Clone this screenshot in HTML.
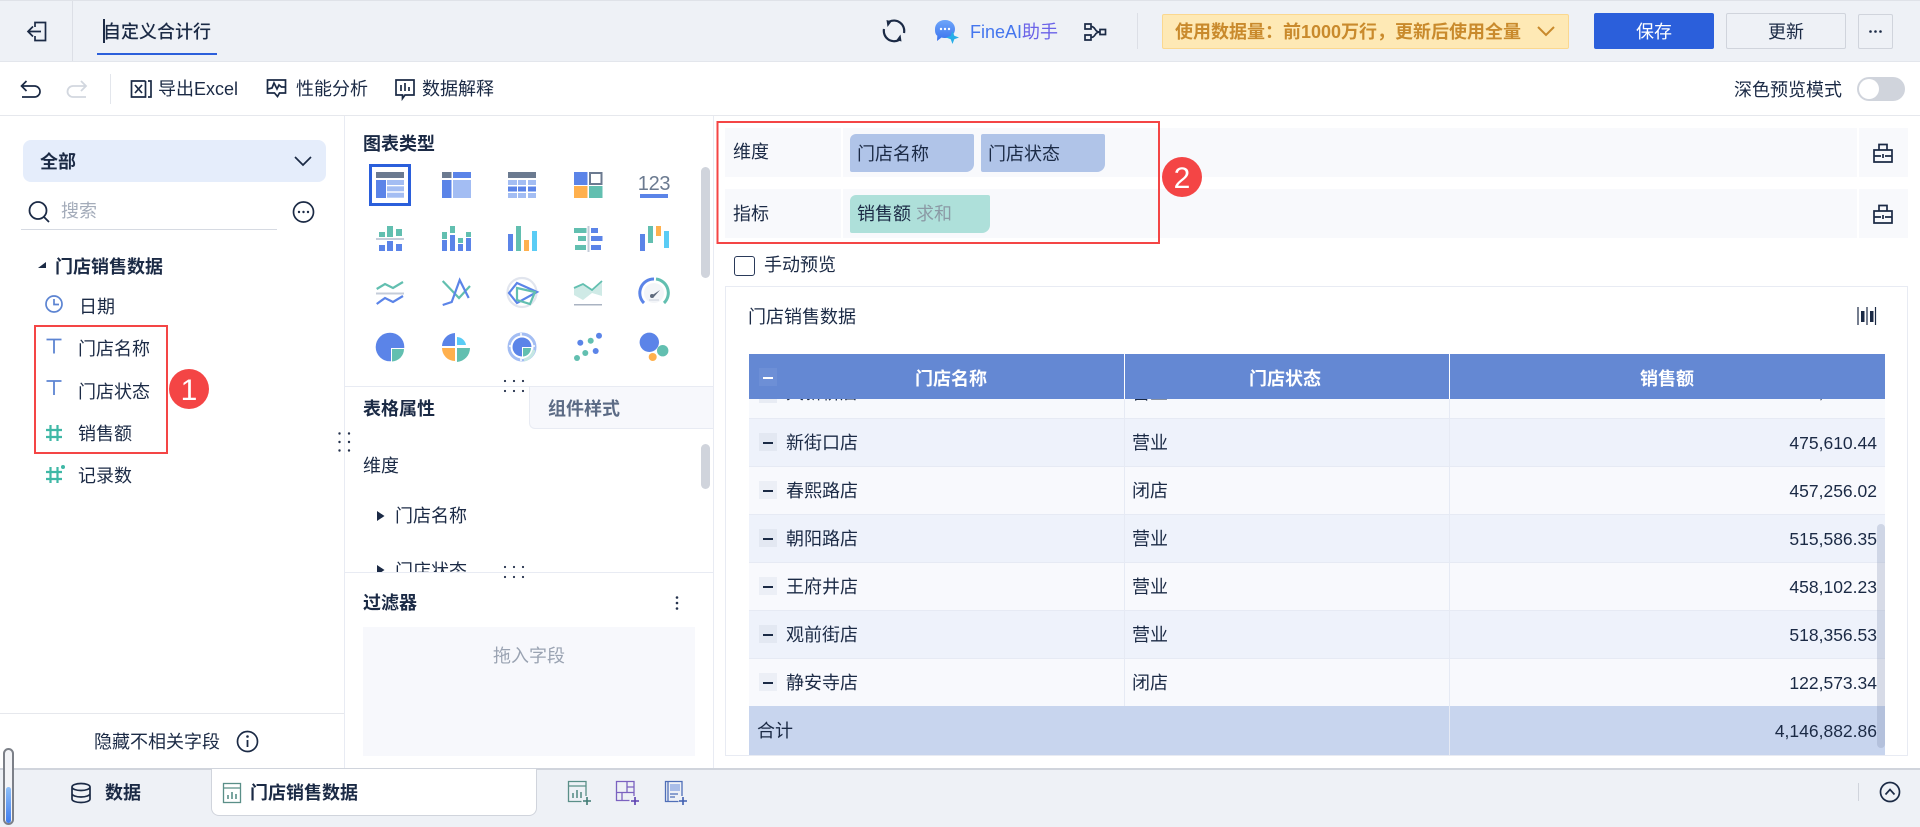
<!DOCTYPE html>
<html lang="zh-CN"><head><meta charset="utf-8"><title>自定义合计行</title>
<style>
html,body{margin:0;padding:0;background:#fff;}
body{position:relative;width:1920px;height:827px;overflow:hidden;font-family:"Liberation Sans","Noto Sans CJK SC",sans-serif;color:#1b2a45;font-size:18px;}
.b{position:absolute;box-sizing:border-box;}
.t{position:absolute;white-space:nowrap;line-height:24px;font-size:18px;margin-top:1px;}
.n{margin-top:0;}
.s{font-weight:700;}
.r{text-align:right;font-size:17.5px;}
svg.o{position:absolute;left:0;top:0;width:1920px;height:827px;}
.ln{fill:none;stroke:#1b2a45;stroke-width:1.7;}
</style></head><body>
<!-- header -->
<div class="b" style="left:0;top:0;width:1920px;height:62px;background:#eef1f6;border-top:1px solid #dfe2e8;border-bottom:1px solid #e3e6ec;"></div>
<div class="b" style="left:72px;top:1px;width:1px;height:60px;background:#dcdfe6;"></div>
<div class="b" style="left:97px;top:53px;width:120px;height:2px;background:#2b5fdb;"></div>
<div class="b" style="left:103px;top:19px;width:2px;height:24px;background:#1b2a45;"></div>
<div class="t" style="left:103px;top:19px;font-weight:500;">自定义合计行</div>
<div class="t" style="left:970px;top:19px;color:#4476ee;">FineAI<span style="color:#6a62e8;">助手</span></div>
<div class="b" style="left:1137px;top:13px;width:1px;height:36px;background:#dcdfe6;"></div>
<div class="b" style="left:1162px;top:14px;width:407px;height:35px;background:#fee9b5;border:1px solid #fbd88f;border-radius:2px;"></div>
<div class="t s" style="left:1175px;top:19px;color:#c98a2c;">使用数据量：前1000万行，更新后使用全量</div>
<div class="b" style="left:1594px;top:13px;width:120px;height:36px;background:#2b5fdb;border-radius:2px;"></div>
<div class="t" style="left:1594px;top:19px;width:120px;text-align:center;color:#fff;">保存</div>
<div class="b" style="left:1726px;top:13px;width:120px;height:36px;border:1px solid #d0d4dc;border-radius:2px;"></div>
<div class="t" style="left:1726px;top:19px;width:120px;text-align:center;">更新</div>
<div class="b" style="left:1858px;top:14px;width:35px;height:35px;border:1px solid #d0d4dc;border-radius:2px;"></div>
<!-- toolbar -->
<div class="b" style="left:0;top:115px;width:1920px;height:1px;background:#e6e8ed;"></div>
<div class="b" style="left:110px;top:74px;width:1px;height:30px;background:#e3e6ec;"></div>
<div class="t" style="left:158px;top:76px;">导出Excel</div>
<div class="t" style="left:296px;top:76px;">性能分析</div>
<div class="t" style="left:422px;top:76px;">数据解释</div>
<div class="t" style="left:1734px;top:77px;">深色预览模式</div>
<div class="b" style="left:1857px;top:77px;width:48px;height:24px;background:#d0d4dc;border-radius:12px;"></div>
<div class="b" style="left:1859px;top:79px;width:20px;height:20px;background:#fff;border-radius:10px;"></div>
<!-- left panel -->
<div class="b" style="left:344px;top:116px;width:1px;height:652px;background:#e8ebf3;"></div>
<div class="b" style="left:713px;top:116px;width:1px;height:652px;background:#e8ebf3;"></div>
<div class="b" style="left:23px;top:140px;width:303px;height:42px;background:#e5edfb;border-radius:8px;"></div>
<div class="t s" style="left:40px;top:149px;">全部</div>
<div class="t" style="left:61px;top:198px;color:#a4acba;">搜索</div>
<div class="b" style="left:21px;top:229px;width:256px;height:1px;background:#d6dae2;"></div>
<div class="t s" style="left:55px;top:254px;">门店销售数据</div>
<div class="t" style="left:79px;top:294px;">日期</div>
<div class="t" style="left:78px;top:336px;">门店名称</div>
<div class="t" style="left:78px;top:379px;">门店状态</div>
<div class="t" style="left:78px;top:421px;">销售额</div>
<div class="t" style="left:78px;top:463px;">记录数</div>
<div class="b" style="left:0;top:713px;width:344px;height:1px;background:#e6e8ed;"></div>
<div class="t n" style="left:94px;top:730px;">隐藏不相关字段</div>
<!-- middle panel -->
<div class="t s" style="left:363px;top:131px;">图表类型</div>
<div class="b" style="left:369px;top:164px;width:42px;height:42px;border:3px solid #2b5fdb;"></div>
<div class="b" style="left:344px;top:386px;width:369px;height:1px;background:#e8ebf3;"></div>
<div class="b" style="left:529px;top:386px;width:184px;height:43px;background:#f7f8fc;border-left:1px solid #e8ebf3;border-bottom:1px solid #e8ebf3;border-top:1px solid #e8ebf3;border-bottom-left-radius:6px;"></div>
<div class="t s" style="left:363px;top:396px;">表格属性</div>
<div class="t s" style="left:548px;top:396px;color:#5c6b85;">组件样式</div>
<div class="t n" style="left:363px;top:454px;">维度</div>
<div class="t n" style="left:395px;top:504px;">门店名称</div>
<div class="b" style="left:345px;top:550px;width:350px;height:22px;overflow:hidden;"><div class="t n" style="left:50px;top:9px;">门店状态</div></div>
<div class="b" style="left:701px;top:167px;width:9px;height:111px;background:#d0d4dc;border-radius:5px;"></div>
<div class="b" style="left:701px;top:444px;width:9px;height:45px;background:#d0d4dc;border-radius:5px;"></div>
<div class="b" style="left:345px;top:572px;width:368px;height:1px;background:#e8ebf3;"></div>
<div class="t s" style="left:363px;top:590px;">过滤器</div>
<div class="b" style="left:363px;top:627px;width:332px;height:129px;background:#f7f8fc;"></div>
<div class="t" style="left:493px;top:643px;color:#9aa3b2;">拖入字段</div>
<!-- dims -->
<div class="b" style="left:725px;top:128px;width:116px;height:49px;background:#f8f9fc;"></div>
<div class="b" style="left:843px;top:128px;width:1014px;height:49px;background:#f8f9fc;"></div>
<div class="b" style="left:1859px;top:128px;width:49px;height:49px;background:#f8f9fc;"></div>
<div class="b" style="left:725px;top:189px;width:116px;height:49px;background:#f8f9fc;"></div>
<div class="b" style="left:843px;top:189px;width:1014px;height:49px;background:#f8f9fc;"></div>
<div class="b" style="left:1859px;top:189px;width:49px;height:49px;background:#f8f9fc;"></div>
<div class="t n" style="left:733px;top:140px;">维度</div>
<div class="t" style="left:733px;top:201px;">指标</div>
<div class="b" style="left:850px;top:134px;width:124px;height:38px;background:#b0c4e8;border-radius:6px 2px 8px 2px;"></div>
<div class="b" style="left:981px;top:134px;width:124px;height:38px;background:#b0c4e8;border-radius:2px 2px 8px 2px;"></div>
<div class="b" style="left:850px;top:195px;width:140px;height:38px;background:#aee0da;border-radius:6px 2px 8px 2px;"></div>
<div class="t" style="left:857px;top:141px;">门店名称</div>
<div class="t" style="left:988px;top:141px;">门店状态</div>
<div class="t" style="left:857px;top:201px;">销售额</div>
<div class="t" style="left:916px;top:201px;color:#8b9aa5;">求和</div>
<div class="b" style="left:734px;top:256px;width:21px;height:20px;border:1.5px solid #2a3a5a;border-radius:3px;background:#fff;"></div>
<div class="t n" style="left:764px;top:253px;">手动预览</div>
<!-- table panel -->
<div class="b" style="left:725px;top:286px;width:1183px;height:470px;border:1px solid #e8ebf3;background:#fff;"></div>
<div class="t" style="left:748px;top:304px;">门店销售数据</div>
<div class="b" style="left:749px;top:399px;width:1136px;height:19px;background:#f7f9fd;overflow:hidden;">
 <div class="b" style="left:10px;top:-14px;width:18px;height:18px;background:#e8ecf4;"></div>
 <div class="t n" style="left:37px;top:-18px;">大新桥店</div>
 <div class="t n" style="left:383px;top:-18px;">营业</div>
 <div class="t n r" style="right:8px;top:-19px;">512,364.12</div>
</div>
<div class="b" style="left:749px;top:418px;width:1136px;height:48px;background:#eef2fb;border-top:1px solid #e6eaf4;"></div>
<div class="b" style="left:749px;top:466px;width:1136px;height:48px;background:#f8f9fd;border-top:1px solid #e6eaf4;"></div>
<div class="b" style="left:749px;top:514px;width:1136px;height:48px;background:#eef2fb;border-top:1px solid #e6eaf4;"></div>
<div class="b" style="left:749px;top:562px;width:1136px;height:48px;background:#f8f9fd;border-top:1px solid #e6eaf4;"></div>
<div class="b" style="left:749px;top:610px;width:1136px;height:48px;background:#eef2fb;border-top:1px solid #e6eaf4;"></div>
<div class="b" style="left:749px;top:658px;width:1136px;height:48px;background:#f8f9fd;border-top:1px solid #e6eaf4;"></div>
<div class="b" style="left:749px;top:706px;width:1136px;height:49px;background:#c8d5ee;"></div>
<div class="b" style="left:1124px;top:399px;width:1px;height:307px;background:#e6eaf4;"></div>
<div class="b" style="left:1449px;top:399px;width:1px;height:356px;background:#e6eaf4;"></div>
<div class="b" style="left:749px;top:354px;width:1136px;height:45px;background:#6488d3;"></div>
<div class="b" style="left:1124px;top:354px;width:1px;height:45px;background:#fff;"></div>
<div class="b" style="left:1449px;top:354px;width:1px;height:45px;background:#fff;"></div>
<div class="b" style="left:759px;top:368px;width:18px;height:18px;background:#6d8fd6;"></div>
<div class="b" style="left:763px;top:377px;width:10px;height:1.5px;background:#fff;"></div>
<div class="t s" style="left:915px;top:366px;color:#fff;">门店名称</div>
<div class="t s" style="left:1249px;top:366px;color:#fff;">门店状态</div>
<div class="t s" style="left:1640px;top:366px;color:#fff;">销售额</div>

<div class="b" style="left:759px;top:433px;width:18px;height:18px;background:#e3e8f2;"></div><div class="b" style="left:763px;top:442px;width:10px;height:1.5px;background:#1b2a45;"></div>
<div class="b" style="left:759px;top:481px;width:18px;height:18px;background:#eceff6;"></div><div class="b" style="left:763px;top:490px;width:10px;height:1.5px;background:#1b2a45;"></div>
<div class="b" style="left:759px;top:529px;width:18px;height:18px;background:#e3e8f2;"></div><div class="b" style="left:763px;top:538px;width:10px;height:1.5px;background:#1b2a45;"></div>
<div class="b" style="left:759px;top:577px;width:18px;height:18px;background:#eceff6;"></div><div class="b" style="left:763px;top:586px;width:10px;height:1.5px;background:#1b2a45;"></div>
<div class="b" style="left:759px;top:625px;width:18px;height:18px;background:#e3e8f2;"></div><div class="b" style="left:763px;top:634px;width:10px;height:1.5px;background:#1b2a45;"></div>
<div class="b" style="left:759px;top:673px;width:18px;height:18px;background:#eceff6;"></div><div class="b" style="left:763px;top:682px;width:10px;height:1.5px;background:#1b2a45;"></div>

<div class="t n" style="left:786px;top:431px;">新街口店</div><div class="t n" style="left:1132px;top:431px;">营业</div><div class="t n r" style="right:43px;top:431px;">475,610.44</div>
<div class="t n" style="left:786px;top:479px;">春熙路店</div><div class="t n" style="left:1132px;top:479px;">闭店</div><div class="t n r" style="right:43px;top:479px;">457,256.02</div>
<div class="t n" style="left:786px;top:527px;">朝阳路店</div><div class="t n" style="left:1132px;top:527px;">营业</div><div class="t n r" style="right:43px;top:527px;">515,586.35</div>
<div class="t n" style="left:786px;top:575px;">王府井店</div><div class="t n" style="left:1132px;top:575px;">营业</div><div class="t n r" style="right:43px;top:575px;">458,102.23</div>
<div class="t n" style="left:786px;top:623px;">观前街店</div><div class="t n" style="left:1132px;top:623px;">营业</div><div class="t n r" style="right:43px;top:623px;">518,356.53</div>
<div class="t n" style="left:786px;top:671px;">静安寺店</div><div class="t n" style="left:1132px;top:671px;">闭店</div><div class="t n r" style="right:43px;top:671px;">122,573.34</div>
<div class="t n" style="left:757px;top:719px;">合计</div><div class="t n r" style="right:43px;top:719px;">4,146,882.86</div>
<div class="b" style="left:1877px;top:524px;width:8px;height:224px;background:rgba(130,145,175,.28);border-radius:4px;"></div>
<!-- bottom -->
<div class="b" style="left:0;top:768px;width:1920px;height:59px;background:#eef1f6;border-top:2px solid #d0d4dc;"></div>
<div class="b" style="left:211px;top:769px;width:326px;height:47px;background:#fff;border:1px solid #d0d4dc;border-top:none;border-radius:0 0 8px 8px;"></div>
<div class="t s n" style="left:105px;top:781px;">数据</div>
<div class="t s n" style="left:250px;top:781px;">门店销售数据</div>
<div class="b" style="left:1858px;top:783px;width:1px;height:18px;background:#d0d4dc;"></div>
<div class="b" style="left:3px;top:748px;width:11px;height:77px;border:2.5px solid #7c8088;border-radius:6px;background:#f3f4f7;"></div>
<div class="b" style="left:6px;top:787px;width:5px;height:36px;border-radius:3px;background:linear-gradient(#8fc0f8,#3f7df0);"></div>

<svg class="o" viewBox="0 0 1920 827" xmlns="http://www.w3.org/2000/svg">
<!-- top icons -->
<path class="ln" d="M35 27V22.500H45.500V40.500H35V36M41 31.500H28.500M33 26.500l-5 5 5 5"/>
<path d="M889 21.800A10.300 10.300 0 0 1 904 33" fill="none" stroke="#1b2a45" stroke-width="2.200"/>
<path d="M899 40A10.300 10.300 0 0 1 884 29" fill="none" stroke="#1b2a45" stroke-width="2.200"/>
<path d="M886.500 20l5 1.500-4 5.500zM901.500 41.500l-5-1.500 4-5.500z" fill="#1b2a45"/>
<path class="ln" d="M1085 24h6v5h-6zM1085 35h6v5h-6zM1100 29.500h5.500v5H1100zM1091 26.500c5 0 3 5.500 9 5.500M1091 37.500c5 0 3-5.500 9-5.500"/>
<defs><linearGradient id="fa" x1="0" y1="0" x2="0" y2="1"><stop offset="0" stop-color="#6ea6fa"/><stop offset="1" stop-color="#3a72ee"/></linearGradient></defs>
<path d="M945 20c6 0 10 4 10 9s-4 9-10 9c-1.200 0-2.500-.2-3.500-.5L937 41l.3-5.200C935 34 935 31.500 935 29c0-5 4-9 10-9z" fill="url(#fa)"/>
<circle cx="941" cy="29" r="1.200" fill="#fff"/><circle cx="945" cy="29" r="1.200" fill="#fff"/><circle cx="949" cy="29" r="1.200" fill="#fff"/>
<path d="M952.500 31l1.800 4.700 4.700 1.800-4.700 1.800-1.800 4.700-1.800-4.700-4.700-1.800 4.700-1.800z" fill="#27aee8"/>
<path d="M1538 27l8 8 8-8" fill="none" stroke="#c98a2c" stroke-width="2"/>
<circle cx="1870.500" cy="31.500" r="1.300" fill="#1b2a45"/><circle cx="1875.500" cy="31.500" r="1.300" fill="#1b2a45"/><circle cx="1880.500" cy="31.500" r="1.300" fill="#1b2a45"/>
<!-- toolbar icons -->
<path class="ln" d="M26.500 81l-5 5 5 5M22 86h12.500a5.500 5.500 0 0 1 0 11H22"/>
<path fill="none" stroke="#d2d7df" stroke-width="1.800" d="M81 81l5 5-5 5M85.500 86H73a5.500 5.500 0 0 0 0 11h13"/>
<path class="ln" d="M145.500 81H131.500V97H145.500V81M135 85l7 8M142 85l-7 8M148 81h3v16h-3"/>
<path class="ln" d="M267.500 80h18v13h-6l-2 3.500-3-3.500h-7zM268 89l4-1 2-5 3 6 2-4 2.500 2h3.500"/>
<path class="ln" d="M396 80h18v15h-9l-2.500 3.500V95H396zM401 85v6M405 83v8M409 87v4"/>
<!-- left icons -->
<path d="M295 157l8 8 8-8" fill="none" stroke="#1b2a45" stroke-width="1.700"/>
<circle cx="38" cy="210.500" r="8.500" class="ln" style="stroke-width:1.800"/><path class="ln" style="stroke-width:1.800" d="M44 217l5 5"/>
<circle cx="303.500" cy="212" r="10" class="ln"/><circle cx="299" cy="212" r="1.200" fill="#1b2a45"/><circle cx="303.500" cy="212" r="1.200" fill="#1b2a45"/><circle cx="308" cy="212" r="1.200" fill="#1b2a45"/>
<path d="M38 268l8-6v6z" fill="#1b2a45"/>
<circle cx="54" cy="304" r="8" fill="none" stroke="#5c84d2" stroke-width="1.700"/><path d="M54 299v5.500h5" fill="none" stroke="#5c84d2" stroke-width="1.700"/>
<path d="M46.500 339.500h15M54 339.500v14M46.500 381h15M54 381v14" fill="none" stroke="#5c84d2" stroke-width="1.800"/>
<path d="M46 430h16M46 437h16M50.500 425v16M57.500 425v16M46 472h16M46 479h16M50.500 467v16M57.500 467v16" fill="none" stroke="#3fb8a6" stroke-width="2.200"/>
<circle cx="63" cy="467" r="2" fill="#3fb8a6"/>
<g fill="#25324d"><circle cx="339.500" cy="433.500" r="1.200"/><circle cx="349" cy="433.500" r="1.200"/><circle cx="339.500" cy="442" r="1.200"/><circle cx="349" cy="442" r="1.200"/><circle cx="339.500" cy="450.500" r="1.200"/><circle cx="349" cy="450.500" r="1.200"/>
<circle cx="505" cy="381" r="1.100"/><circle cx="514" cy="381" r="1.100"/><circle cx="523" cy="381" r="1.100"/><circle cx="505" cy="391" r="1.100"/><circle cx="514" cy="391" r="1.100"/><circle cx="523" cy="391" r="1.100"/>
<circle cx="505" cy="567" r="1.100"/><circle cx="514" cy="567" r="1.100"/><circle cx="523" cy="567" r="1.100"/><circle cx="505" cy="577" r="1.100"/><circle cx="514" cy="577" r="1.100"/><circle cx="523" cy="577" r="1.100"/>
<circle cx="677" cy="597.500" r="1.300"/><circle cx="677" cy="603" r="1.300"/><circle cx="677" cy="608.500" r="1.300"/></g>
<path d="M377 511l7.500 5-7.500 5z" fill="#1b2a45"/><path d="M377 565l7.500 5-3 2H377z" fill="#1b2a45"/>
<circle cx="247.500" cy="741.500" r="10" class="ln"/><path d="M247.500 740v7" stroke="#1b2a45" stroke-width="1.800"/><circle cx="247.500" cy="736.500" r="1.300" fill="#1b2a45"/>
<!-- chart icons -->
<g fill="#6b7a90"><rect x="376" y="172" width="28" height="6"/><rect x="442" y="172" width="9.500" height="6"/><rect x="508" y="172" width="28" height="6"/><rect x="376" y="238" width="28" height="2" fill="#c5ccd9"/></g>
<g fill="#5b84e8"><rect x="376" y="180" width="10" height="18"/><rect x="453" y="172" width="18" height="6"/><rect x="442" y="180" width="9.500" height="18"/>
<rect x="508" y="186.500" width="9" height="5"/><rect x="518" y="186.500" width="8" height="5"/><rect x="528" y="186.500" width="8" height="5"/><rect x="574" y="172" width="13.500" height="13"/><rect x="640" y="194" width="28" height="4"/></g>
<g fill="#a3bdf3"><rect x="387" y="180" width="17" height="5"/><rect x="387" y="186.300" width="17" height="5"/><rect x="387" y="192.700" width="17" height="5"/><rect x="453" y="180" width="18" height="18"/>
<rect x="508" y="180" width="9" height="5"/><rect x="518" y="180" width="8" height="5"/><rect x="528" y="180" width="8" height="5"/><rect x="508" y="193" width="9" height="5"/><rect x="518" y="193" width="8" height="5"/><rect x="528" y="193" width="8" height="5"/></g>
<rect x="590" y="173" width="11.500" height="11" fill="none" stroke="#6b7a90" stroke-width="2"/>
<rect x="574" y="186" width="13.500" height="12" fill="#ffb04d"/><rect x="589" y="186" width="13.500" height="12" fill="#62bfb0"/>
<text x="654" y="190" text-anchor="middle" font-family="Liberation Sans" font-size="20" fill="#6b7a90" letter-spacing="-.3">123</text>
<g fill="#62bfb0"><rect x="379" y="232" width="6" height="5"/><rect x="387" y="226" width="6" height="11"/><rect x="396" y="229" width="6" height="7"/><rect x="442" y="232" width="5" height="7"/><rect x="450" y="226" width="5" height="7"/><rect x="458" y="238" width="5" height="5"/><rect x="466" y="232" width="5" height="5"/><rect x="516" y="226" width="5" height="25"/><rect x="574" y="228" width="12.500" height="5"/><rect x="578" y="236" width="8" height="5"/><rect x="575" y="245" width="11" height="5"/><rect x="648" y="226" width="5" height="17"/></g>
<g fill="#5b84e8"><rect x="379" y="245" width="6" height="6"/><rect x="387" y="241" width="6" height="10"/><rect x="396" y="244" width="6" height="7"/><rect x="442" y="240" width="5" height="11"/><rect x="450" y="235" width="5" height="16"/><rect x="458" y="244" width="5" height="7"/><rect x="466" y="238" width="5" height="13"/><rect x="508" y="234" width="5" height="17"/><rect x="591" y="228" width="7" height="5"/><rect x="591" y="236" width="11.500" height="5"/><rect x="591" y="245" width="10" height="5"/><rect x="640" y="234" width="5" height="17"/></g>
<rect x="524" y="240" width="5" height="11" fill="#ffb04d"/><rect x="532" y="231" width="5" height="20" fill="#5accf5"/><rect x="587.500" y="226" width="2" height="26" fill="#c5ccd9"/><rect x="656" y="226" width="5" height="10" fill="#ffb04d"/><rect x="664" y="231" width="5" height="17" fill="#5accf5"/>
<g fill="none" stroke-width="2.200"><path d="M376.700 289l8.300-5 8 4 10-6" stroke="#62bfb0"/><rect x="376" y="292.500" width="28" height="2" fill="#c5ccd9" stroke="none"/><path d="M376.700 304l8.300-6 8 4 10-6" stroke="#5b84e8"/>
<path d="M442.700 281l16.300 17 11-12" stroke="#62bfb0"/><path d="M442.700 305l9-3 8-22 9 18" stroke="#5b84e8"/>
<circle cx="522" cy="292.500" r="14.500" stroke="#e1e5ee"/><path d="M517 283l20 9-20 11-8-10z" stroke="#5b84e8"/><path d="M517 288l18 4-5 12-13-4z" stroke="#62bfb0"/>
<path d="M654 279a14 14 0 0 0-10 24" stroke="#5b84e8" stroke-width="3"/><path d="M656 279a14 14 0 0 1 8 24" stroke="#62bfb0" stroke-width="3"/></g>
<path d="M574 288l9-4 9 6 10-9v15l-10-3-9 7-9-5z" fill="#cfeae6"/><path d="M574 288l9-4 9 6 10-9" fill="none" stroke="#62bfb0" stroke-width="1.800"/><rect x="574" y="304" width="28" height="1.500" fill="#aab3c2"/>
<circle cx="654" cy="293" r="10" fill="#f3f5f8"/><path d="M651 296l9-6-7 8z" fill="#5f6b7d"/><circle cx="652" cy="296" r="2" fill="#5f6b7d"/><rect x="649" y="299" width="10" height="2" fill="#dfe3ea"/>
<circle cx="390" cy="347" r="14.300" fill="#5b84e8"/><path d="M391 348h14.300L405 348a15 15 0 0 1-14 14z" fill="#fff"/><path d="M392 349h12a12.500 12.500 0 0 1-12 12.500z" fill="#62bfb0"/>
<path d="M455 346h-13a13.500 13.500 0 0 1 13-13z" fill="#5b84e8"/><path d="M457 345v-8a9.500 9.500 0 0 1 9 8z" fill="#5accf5"/><path d="M455 348h-13a13 13 0 0 0 13 13z" fill="#ffb04d"/><path d="M457 348h13a14 14 0 0 1-13 14z" fill="#62bfb0"/>
<circle cx="522" cy="347" r="13" fill="none" stroke="#a3bdf3" stroke-width="3"/><path d="M509 346h26M521 333v28" stroke="#fff" stroke-width="1.500"/><circle cx="522" cy="347" r="9.500" fill="#5b84e8"/><path d="M522 347h11a11 11 0 0 1-11 12z" fill="#fff"/><path d="M523 348h8a8.500 8.500 0 0 1-8 8.500z" fill="#62bfb0"/><path d="M534 350a13 13 0 0 1-10 10" fill="none" stroke="#c5e7e2" stroke-width="3"/>
<circle cx="577" cy="358" r="3" fill="#62bfb0"/><circle cx="585.300" cy="353" r="3" fill="#62bfb0"/><circle cx="595.700" cy="351" r="3" fill="#5b84e8"/><circle cx="580.300" cy="342.700" r="3" fill="#5b84e8"/><circle cx="590.700" cy="340.700" r="3" fill="#62bfb0"/><circle cx="599" cy="335.700" r="3" fill="#5b84e8"/>
<circle cx="649.300" cy="342.300" r="9.700" fill="#5b84e8"/><circle cx="662.700" cy="350.700" r="5.700" fill="#62bfb0"/><circle cx="652.700" cy="357" r="4" fill="#ffb04d"/>
<!-- dim right icons -->
<path class="ln" d="M1874 150h18v12h-18zM1879 150v-5.500h8v5.500M1874 156h7M1885 156h7M1883 154v4"/>
<path class="ln" d="M1874 211h18v12h-18zM1879 211v-5.500h8v5.500M1874 217h7M1885 217h7M1883 215v4"/>
<!-- bars icon -->
<path d="M1858 307v18M1875.500 307v18M1867 307v18" stroke="#1b2a45" stroke-width="1.200"/><rect x="1861" y="311" width="3.500" height="11" fill="#1b2a45"/><rect x="1870" y="311" width="3.500" height="11" fill="#1b2a45"/>
<!-- bottom icons -->
<path class="ln" d="M72 787c0-2 4-3.500 9-3.500s9 1.500 9 3.500v12c0 2-4 3.500-9 3.500s-9-1.500-9-3.500zM72 787c0 2 4 3.500 9 3.500s9-1.500 9-3.500M72 793.500c0 2 4 3.500 9 3.500s9-1.500 9-3.500"/>
<g fill="none" stroke="#5a8f88" stroke-width="1.300"><rect x="223.500" y="783.500" width="17" height="19"/><path d="M223.500 788h17"/><path d="M228 799v-4M232 799v-7M236 799v-5" stroke-width="1.600"/></g>
<g fill="none" stroke="#5a8f88" stroke-width="1.300"><path d="M586 796v-14.500h-17.500v20h13M568.500 786h17.500"/><path d="M573 798v-5M577 798v-8M581 798v-6" stroke-width="1.600"/></g><path d="M587 797v8M583 801h8" stroke="#3f7b73" stroke-width="1.600"/>
<g fill="none" stroke="#7b62c0" stroke-width="1.300"><path d="M634 796v-14.500h-17.500v19h13M627 781.500v11M616.500 792.500h17.500M627 787h7M622 792.500v8"/></g><path d="M635 797v8M631 801h8" stroke="#5a3fb0" stroke-width="1.600"/>
<g fill="none" stroke="#4f6fb8" stroke-width="1.300"><path d="M682 796v-14.500h-16.500v20h13M668 781.500v20"/><rect x="670" y="784" width="10" height="7" fill="#a9bde8" stroke="none"/><path d="M670 794h8M670 797h5"/></g><path d="M683 797v8M679 801h8" stroke="#3f5fb0" stroke-width="1.600"/>
<circle cx="1890" cy="792" r="9.500" class="ln"/><path class="ln" d="M1885.500 794.500l4.500-5 4.500 5"/>
<!-- annotations -->
<rect x="35" y="326" width="132" height="127" fill="none" stroke="#f44545" stroke-width="2"/>
<rect x="717.500" y="122" width="441.500" height="121" fill="none" stroke="#f44545" stroke-width="2"/>
<circle cx="189" cy="389" r="20" fill="#f44545"/><circle cx="1182" cy="177" r="20" fill="#f44545"/>
<text x="189" y="400" text-anchor="middle" font-family="Liberation Sans" font-size="30" fill="#fff">1</text>
<text x="1182" y="188" text-anchor="middle" font-family="Liberation Sans" font-size="30" fill="#fff">2</text>
</svg>
</body></html>
